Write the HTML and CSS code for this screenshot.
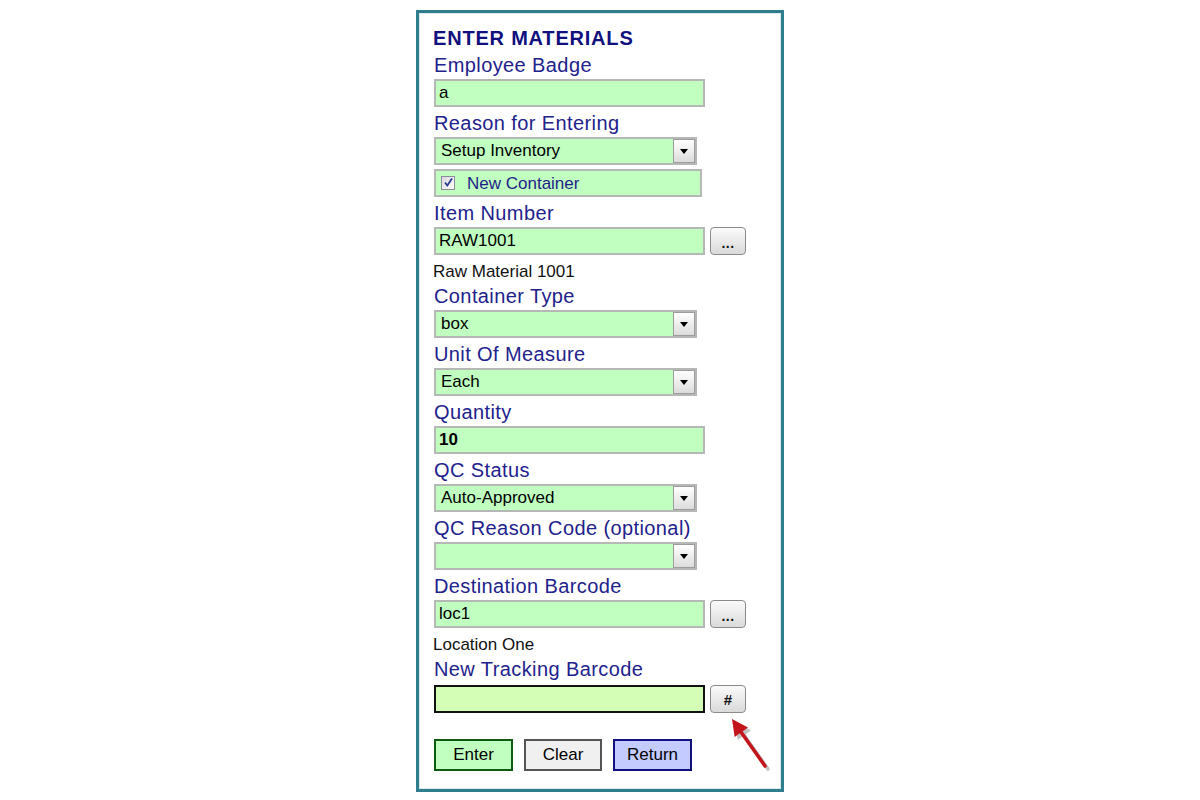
FILE: index.html
```html
<!DOCTYPE html>
<html>
<head>
<meta charset="utf-8">
<title>Enter Materials</title>
<link rel="stylesheet" href="styles.css">
</head>
<body>
<div class="panel">
  <div class="title">ENTER MATERIALS</div>

  <div class="label">Employee Badge</div>
  <div class="row"><div class="field">a</div></div>

  <div class="label">Reason for Entering</div>
  <div class="row"><div class="field select"><span>Setup Inventory</span><span class="arrow"></span></div></div>
  <div class="row check-row">
    <div class="check">
      <span class="box"><svg width="11" height="11" viewBox="0 0 11 11"><path d="M2 5.5 L4.3 8.5 L9 1.5" fill="none" stroke="#2b3a8c" stroke-width="1.8"/></svg></span>
      <span>New Container</span>
    </div>
  </div>

  <div class="label">Item Number</div>
  <div class="row"><div class="field">RAW1001</div><div class="mini dots">...</div></div>
  <div class="note">Raw Material 1001</div>

  <div class="label">Container Type</div>
  <div class="row"><div class="field select"><span>box</span><span class="arrow"></span></div></div>

  <div class="label">Unit Of Measure</div>
  <div class="row"><div class="field select"><span>Each</span><span class="arrow"></span></div></div>

  <div class="label">Quantity</div>
  <div class="row"><div class="field bold">10</div></div>

  <div class="label">QC Status</div>
  <div class="row"><div class="field select"><span>Auto-Approved</span><span class="arrow"></span></div></div>

  <div class="label">QC Reason Code (optional)</div>
  <div class="row"><div class="field select"><span></span><span class="arrow"></span></div></div>

  <div class="label">Destination Barcode</div>
  <div class="row"><div class="field">loc1</div><div class="mini dots">...</div></div>
  <div class="note">Location One</div>

  <div class="label">New Tracking Barcode</div>
  <div class="row tracking-row"><div class="field tracking"></div><div class="mini hash">#</div></div>

  <div class="actions">
    <div class="btn enter">Enter</div>
    <div class="btn clear">Clear</div>
    <div class="btn return">Return</div>
  </div>

  <svg class="pointer" width="60" height="66" viewBox="0 0 60 66">
    <g class="shadow" transform="translate(3,3)">
      <line x1="21" y1="20" x2="45" y2="54" stroke="#9a9a9a" stroke-width="3.5" stroke-linecap="round"/>
      <polygon points="12,7 28,15.5 14.6,25" fill="#9a9a9a"/>
    </g>
    <line x1="21" y1="20" x2="45" y2="54" stroke="#c4141c" stroke-width="3.5" stroke-linecap="round"/>
    <polygon points="12,7 28,15.5 14.6,25" fill="#c4141c"/>
  </svg>
</div>
</body>
</html>
```
FILE: styles.css
```css
* { box-sizing: border-box; }

body {
  margin: 0;
  background: #ffffff;
  font-family: "Liberation Sans", Arial, sans-serif;
}

.panel {
  position: relative;
  width: 368px;
  height: 782px;
  margin: 10px auto 0;
  border: 3px solid #2f7e8e;
  box-shadow: inset 0 0 0 1px #d9e9ec;
  padding: 13px 0 0 14px;
  background: #ffffff;
}

.title {
  font-size: 20px;
  line-height: 24px;
  font-weight: bold;
  color: #10107e;
  letter-spacing: 0.8px;
}

.label {
  font-size: 20px;
  line-height: 24px;
  color: #22228c;
  letter-spacing: 0.4px;
  margin-top: 4px;
  padding-left: 1px;
}

.title + .label { margin-top: 3px; }

.row {
  display: flex;
  align-items: flex-start;
  gap: 5px;
  margin-top: 2px;
  margin-left: 1px;
}

.check-row { margin-top: 4px; }
.tracking-row { margin-top: 4px; }

.field {
  width: 271px;
  height: 28px;
  border: 2px solid #b6b8b6;
  background: #c0ffc0;
  font-size: 17px;
  line-height: 24px;
  padding-left: 3px;
  color: #000;
}

.bold { font-weight: bold; }

.select {
  width: 263px;
  display: flex;
  justify-content: space-between;
  padding-left: 5px;
}

.arrow {
  width: 22px;
  height: 24px;
  border: 1px solid #9c9c9c;
  background: linear-gradient(#ffffff, #dcdcdc);
  display: flex;
  align-items: center;
  justify-content: center;
}

.arrow::after {
  content: "";
  border-left: 4px solid transparent;
  border-right: 4px solid transparent;
  border-top: 5px solid #000;
}

.check {
  width: 268px;
  height: 28px;
  border: 2px solid #b6b8b6;
  background: #c0ffc0;
  display: flex;
  align-items: center;
  padding-left: 5px;
  padding-top: 2px;
  font-size: 17px;
  color: #1e1e88;
}

.box {
  width: 14px;
  height: 14px;
  margin-top: -3px;
  border: 1px solid #8c8c9c;
  background: linear-gradient(135deg, #d8d8de, #ffffff);
  margin-right: 12px;
  display: flex;
  align-items: center;
  justify-content: center;
}

.note {
  font-size: 17px;
  line-height: 22px;
  margin-top: 6px;
  color: #111;
}

.note + .label { margin-top: 1px; }

.mini {
  width: 36px;
  height: 28px;
  border: 1px solid #8a8a8a;
  border-radius: 4px;
  background: linear-gradient(#fafafa, #dadada);
  display: flex;
  justify-content: center;
  font-weight: bold;
  color: #111;
}

.dots {
  align-items: flex-end;
  font-size: 14px;
  line-height: 18px;
  letter-spacing: 0.5px;
  padding-bottom: 2px;
}

.hash {
  align-items: center;
  font-size: 15px;
}

.tracking {
  border-color: #111;
  background: #d4fdb6;
}

.actions {
  display: flex;
  gap: 11px;
  margin-top: 26px;
  margin-left: 1px;
}

.btn {
  width: 79px;
  height: 32px;
  border: 2px solid;
  font-size: 17px;
  display: flex;
  align-items: center;
  justify-content: center;
  color: #000;
}

.enter { background: #c0ffc0; border-color: #0e5a10; }
.clear { background: #f0f0f0; border-color: #555555; width: 78px; }
.return { background: #c4ccff; border-color: #10107e; }

.pointer {
  position: absolute;
  left: 301px;
  top: 699px;
}

.shadow { opacity: 0.6; }
```
